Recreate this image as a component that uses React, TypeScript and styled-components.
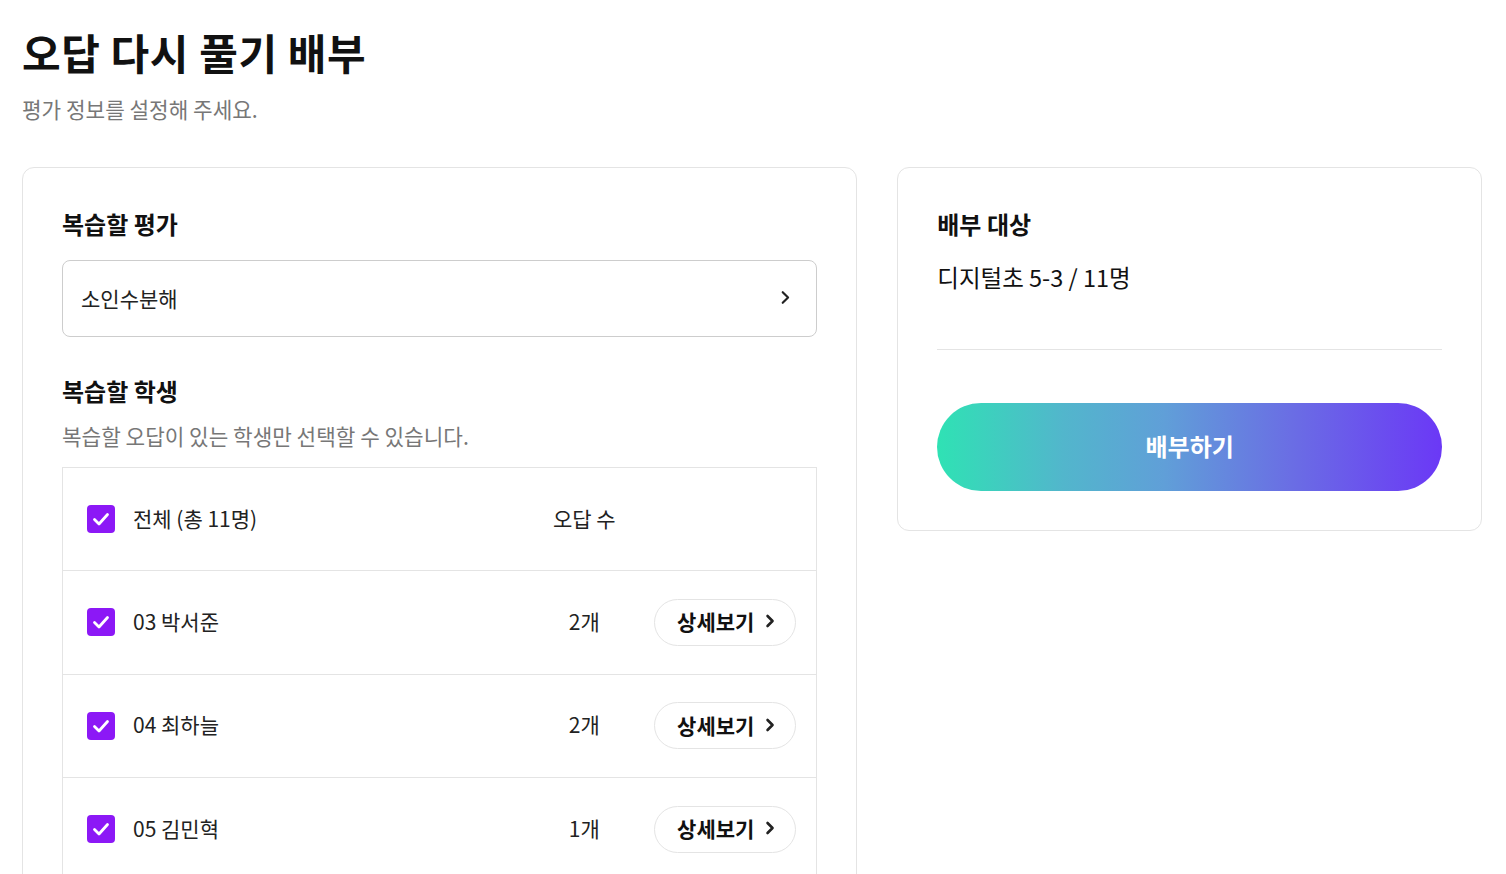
import React from "react";
import styled, { createGlobalStyle } from "styled-components";

const GlobalStyle = createGlobalStyle`
  * { box-sizing: border-box; }
  html, body { margin: 0; padding: 0; background: #ffffff; }
  body {
    font-family: "Noto Sans CJK KR", "Noto Sans", sans-serif;
    color: #111111;
  }
`;

const Page = styled.div`
  padding: 24px 24px 40px 22px;
`;

const Title = styled.h1`
  margin: 0;
  font-size: 42px;
  line-height: 56px;
  font-weight: 700;
  color: #111111;
  letter-spacing: 0.6px;
`;

const Subtitle = styled.p`
  margin: 15px 0 0;
  font-size: 21.3px;
  line-height: 28px;
  color: #777777;
  font-weight: 400;
`;

const Columns = styled.div`
  display: grid;
  grid-template-columns: 10fr 7fr;
  gap: 40px;
  margin-top: 44px;
  align-items: start;
`;

const Card = styled.section`
  border: 1px solid #e4e4e4;
  border-radius: 12px;
  padding: 39px;
  background: #ffffff;
`;

const SectionTitle = styled.h2<{ $top?: number }>`
  margin: ${(p) => p.$top ?? 0}px 0 0;
  font-size: 24px;
  line-height: 34px;
  font-weight: 700;
  color: #111111;
`;

const SelectBox = styled.button`
  margin-top: 19px;
  width: 100%;
  height: 77px;
  border: 1px solid #cdcdcd;
  border-radius: 8px;
  background: #ffffff;
  display: flex;
  align-items: center;
  justify-content: space-between;
  padding: 0 25px 2px 18px;
  font-family: inherit;
  font-size: 21px;
  color: #222222;
  cursor: pointer;
`;

const Description = styled.p`
  margin: 13px 0 0;
  font-size: 21.3px;
  line-height: 30px;
  color: #777777;
`;

const Table = styled.div`
  margin-top: 16px;
  border: 1px solid #e4e4e4;
`;

const Row = styled.div<{ $head?: boolean }>`
  display: grid;
  grid-template-columns: 1fr 100px 142px;
  column-gap: 20px;
  align-items: center;
  height: ${(p) => (p.$head ? 102 : 103.5)}px;
  padding: 0 20px 3px 24px;
  & + & {
    border-top: 1px solid #e4e4e4;
  }
`;

const NameCell = styled.label`
  display: flex;
  align-items: center;
  gap: 18px;
  font-size: 21px;
  color: #222222;
`;

const CheckBox = styled.span`
  width: 28px;
  height: 28px;
  border-radius: 4px;
  background: #8c18f6;
  display: inline-flex;
  align-items: center;
  justify-content: center;
  flex-shrink: 0;
  margin-top: 3px;
`;

const CountCell = styled.span`
  text-align: center;
  font-size: 21px;
  color: #222222;
`;

const DetailButton = styled.button`
  height: 47px;
  border: 1px solid #e4e4e4;
  border-radius: 24px;
  background: #ffffff;
  display: inline-flex;
  align-items: center;
  justify-content: center;
  gap: 11px;
  font-family: inherit;
  font-size: 21px;
  font-weight: 700;
  color: #111111;
  cursor: pointer;
  padding: 0 0 2px 2px;
  margin-top: 3px;
`;

const TargetText = styled.p`
  margin: 19px 0 0;
  font-size: 23.5px;
  line-height: 34px;
  color: #111111;
`;

const Divider = styled.hr`
  margin: 55px 0 0;
  border: none;
  border-top: 1px solid #e4e4e4;
`;

const SendButton = styled.button`
  margin-top: 53px;
  width: 100%;
  height: 88px;
  border: none;
  border-radius: 44px;
  background: linear-gradient(90deg, #2fe2b4 0%, #52b6cc 25%, #609fd8 45%, #6a6ee4 70%, #6b38f6 100%);
  color: #ffffff;
  font-family: inherit;
  font-size: 24px;
  font-weight: 700;
  cursor: pointer;
  padding-bottom: 4px;
`;

const Check = () => (
  <svg width="20" height="20" viewBox="0 0 20 20" fill="none">
    <path d="M3.5 10.5 L8 15 L16.5 5.5" stroke="#ffffff" strokeWidth="2.8" strokeLinecap="round" strokeLinejoin="round" />
  </svg>
);

const Chevron = ({ size = 14, stroke = 2.2 }: { size?: number; stroke?: number }) => (
  <svg width={size * 0.72} height={size} viewBox="0 0 10 14" fill="none">
    <path d="M2.5 2 L7.5 7 L2.5 12" stroke="#222222" strokeWidth={stroke} strokeLinecap="round" strokeLinejoin="round" />
  </svg>
);

const students = [
  { id: "03", name: "박서준", count: 2 },
  { id: "04", name: "최하늘", count: 2 },
  { id: "05", name: "김민혁", count: 1 },
];

export default function App() {
  return (
    <>
      <GlobalStyle />
      <Page>
        <Title>오답 다시 풀기 배부</Title>
        <Subtitle>평가 정보를 설정해 주세요.</Subtitle>
        <Columns>
          <Card>
            <SectionTitle>복습할 평가</SectionTitle>
            <SelectBox>
              <span>소인수분해</span>
              <Chevron size={15} stroke={2} />
            </SelectBox>
            <SectionTitle $top={37}>복습할 학생</SectionTitle>
            <Description>복습할 오답이 있는 학생만 선택할 수 있습니다.</Description>
            <Table>
              <Row $head>
                <NameCell>
                  <CheckBox>
                    <Check />
                  </CheckBox>
                  전체 (총 11명)
                </NameCell>
                <CountCell>오답 수</CountCell>
                <span />
              </Row>
              {students.map((s) => (
                <Row key={s.id}>
                  <NameCell>
                    <CheckBox>
                      <Check />
                    </CheckBox>
                    {s.id} {s.name}
                  </NameCell>
                  <CountCell>{s.count}개</CountCell>
                  <DetailButton>
                    상세보기
                    <Chevron size={14} stroke={2.6} />
                  </DetailButton>
                </Row>
              ))}
            </Table>
          </Card>
          <Card>
            <SectionTitle>배부 대상</SectionTitle>
            <TargetText>디지털초 5-3 / 11명</TargetText>
            <Divider />
            <SendButton>배부하기</SendButton>
          </Card>
        </Columns>
      </Page>
    </>
  );
}
